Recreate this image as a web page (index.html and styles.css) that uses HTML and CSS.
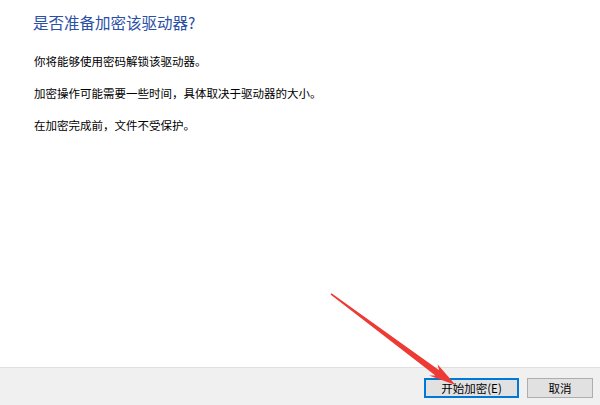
FILE: index.html
```html
<!DOCTYPE html>
<html lang="zh-CN">
<head>
<meta charset="utf-8">
<title>BitLocker</title>
<link rel="stylesheet" href="styles.css">
</head>
<body>
<div class="dialog">
  <main class="content">
    <h1 class="title">是否准备加密该驱动器?</h1>
    <p class="text">你将能够使用密码解锁该驱动器。</p>
    <p class="text">加密操作可能需要一些时间，具体取决于驱动器的大小。</p>
    <p class="text">在加密完成前，文件不受保护。</p>
  </main>
  <footer class="footer">
    <button class="btn btn-primary">开始加密(E)</button>
    <button class="btn btn-cancel">取消</button>
  </footer>
  <svg class="arrow" width="600" height="405" viewBox="0 0 600 405">
    <polygon fill="#ee3a35" points="331.5,293.3 439.2,370.3 437.5,364.3 455.5,385 429.1,375.5 435.4,375.5 330.5,294.6"/>
  </svg>
</div>
</body>
</html>
```

FILE: styles.css
```css
html, body {
  margin: 0;
  padding: 0;
  background: #ffffff;
}
body {
  width: 600px;
  height: 405px;
  overflow: hidden;
  font-family: "Noto Sans CJK SC", "Noto Sans", sans-serif;
}
.dialog {
  position: relative;
  width: 600px;
  height: 405px;
  display: flex;
  flex-direction: column;
}
.content {
  flex: 1;
  padding: 12px 0 0 33px;
  display: flex;
  flex-direction: column;
}
.title {
  margin: 0 0 21px 0;
  font-size: 15.5px;
  line-height: 20px;
  font-weight: normal;
  color: #2a4fa6;
}
.text {
  margin: 0 0 16px 1px;
  font-size: 11.5px;
  line-height: 16px;
  color: #000000;
}
.footer {
  height: 38px;
  border-top: 1px solid #dfdfdf;
  background: #f0f0f0;
  display: flex;
  justify-content: flex-end;
  align-items: flex-start;
  gap: 8px;
  padding: 10px 7px 0 0;
  box-sizing: border-box;
  flex: none;
}
.btn {
  height: 20px;
  box-sizing: border-box;
  background: #e1e1e1;
  font-family: "Noto Sans CJK SC", "Noto Sans", sans-serif;
  font-size: 11.5px;
  line-height: 14px;
  color: #000000;
  padding: 0;
  margin: 0;
}
.btn-primary {
  width: 95px;
  border: 2px solid #0078d7;
}
.btn-cancel {
  width: 66px;
  border: 1px solid #adadad;
}
.arrow {
  position: absolute;
  left: 0;
  top: 0;
  pointer-events: none;
}
```
